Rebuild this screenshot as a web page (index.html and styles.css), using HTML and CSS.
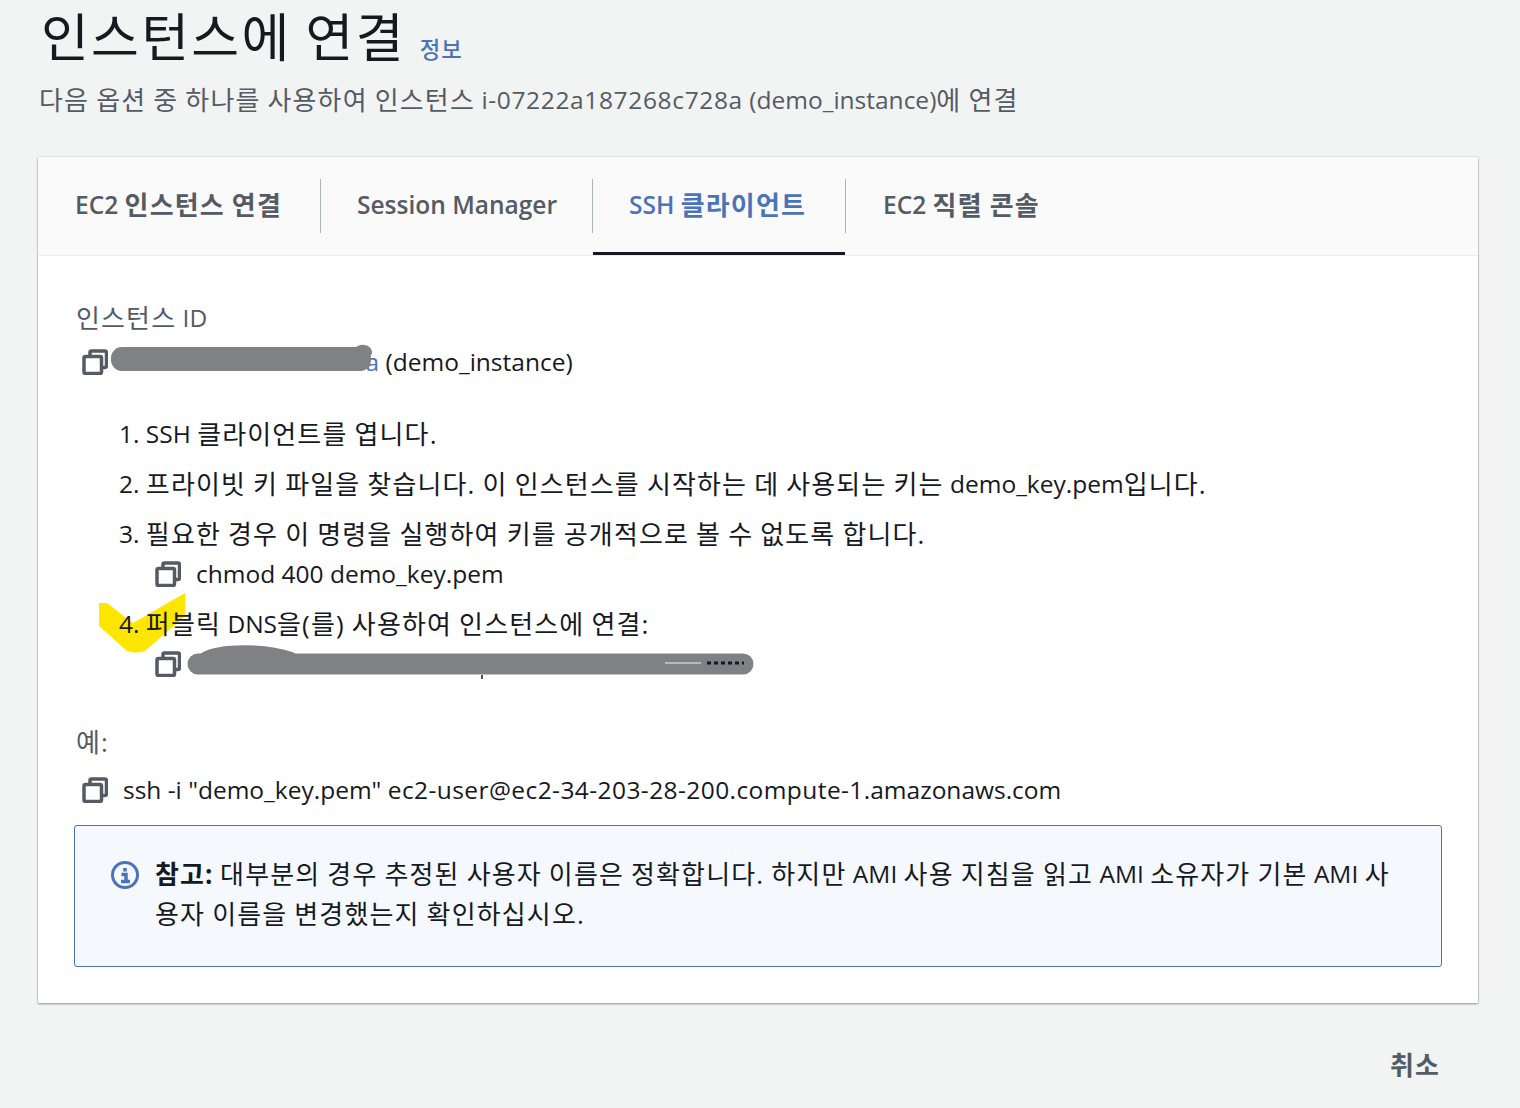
FILE: index.html
```html
<!DOCTYPE html>
<html lang="ko">
<head>
<meta charset="utf-8">
<title>인스턴스에 연결</title>
<link rel="stylesheet" href="styles.css">
</head>
<body>
<header class="page-head">
  <div class="title-row"><h1 class="title"><span class="ko">인스턴스에 연결</span></h1><a class="info-link"><span class="ko">정보</span></a></div>
  <p class="subtitle"><span class="ko">다음 옵션 중 하나를 사용하여 인스턴스</span> <span class="wide-id">i-07222a187268c728a</span> (demo_instance)<span class="ko">에 연결</span></p>
</header>
<main class="card">
  <nav class="tabs">
    <div class="tab tab-first">EC2 <span class="ko">인스턴스 연결</span></div>
    <div class="tab tab-session">Session Manager</div>
    <div class="tab tab-ssh tab-active">SSH <span class="ko">클라이언트</span></div>
    <div class="tab tab-last">EC2 <span class="ko">직렬 콘솔</span></div>
  </nav>
  <section class="content">
    <div class="field-label"><span class="ko">인스턴스</span> ID</div>
    <div class="copy-row instance-row">
      <svg class="copy-icon" viewBox="0 0 26 26"><path d="M8 7V3.500a1.500 1.500 0 0 1 1.500-1.500H23a1.500 1.500 0 0 1 1.500 1.500V17a1.500 1.500 0 0 1-1.500 1.500H19.500"/><rect x="2" y="7.500" width="17.500" height="17" rx="1.500"/></svg>
      <span class="instance-id"><a class="instance-link">i-07222a187268c728a</a> (demo_instance)</span>
      <svg class="scribble scribble-id" viewBox="0 0 266 30"><path d="M12 15H250M12 17H250"/><path class="scrib-thin" d="M248 8c3-3 9-3 10 1"/></svg>
    </div>
    <ol class="steps">
      <li class="step">SSH <span class="ko">클라이언트를 엽니다.</span></li>
      <li class="step"><span class="ko">프라이빗 키 파일을 찾습니다. 이 인스턴스를 시작하는 데 사용되는 키는</span> demo_key.pem<span class="ko">입니다.</span></li>
      <li class="step"><span class="ko">필요한 경우 이 명령을 실행하여 키를 공개적으로 볼 수 없도록 합니다.</span>
        <div class="copy-row cmd-row">
          <svg class="copy-icon" viewBox="0 0 26 26"><path d="M8 7V3.500a1.500 1.500 0 0 1 1.500-1.500H23a1.500 1.500 0 0 1 1.500 1.500V17a1.500 1.500 0 0 1-1.500 1.500H19.500"/><rect x="2" y="7.500" width="17.500" height="17" rx="1.500"/></svg>
          <span>chmod 400 demo_key.pem</span>
        </div>
      </li>
      <li class="step step-dns">
        <svg class="marker" viewBox="0 0 86 60"><path d="M0 10h8l26 20L86 0v23L46 58q-8 3-18 0L0 33z"/></svg>
        <span class="step-text"><span class="ko">퍼블릭</span> DNS<span class="ko">을(를) 사용하여 인스턴스에 연결:</span></span>
        <div class="copy-row cmd-row">
          <svg class="copy-icon" viewBox="0 0 26 26"><path d="M8 7V3.500a1.500 1.500 0 0 1 1.500-1.500H23a1.500 1.500 0 0 1 1.500 1.500V17a1.500 1.500 0 0 1-1.500 1.500H19.500"/><rect x="2" y="7.500" width="17.500" height="17" rx="1.500"/></svg>
          <svg class="scribble scribble-dns" viewBox="0 0 575 40"><path d="M13 21H558"/><path class="scrib-bump" d="M20 15C35 6 80 6 106 15"/><path class="scrib-tick" d="M297 32v4"/><path class="scrib-tail" d="M480 20h36"/><path class="scrib-text" d="M522 20h37"/></svg>
        </div>
      </li>
    </ol>
    <div class="example-label"><span class="ko">예:</span></div>
    <div class="copy-row example-row">
      <svg class="copy-icon" viewBox="0 0 26 26"><path d="M8 7V3.500a1.500 1.500 0 0 1 1.500-1.500H23a1.500 1.500 0 0 1 1.500 1.500V17a1.500 1.500 0 0 1-1.500 1.500H19.500"/><rect x="2" y="7.500" width="17.500" height="17" rx="1.500"/></svg>
      <span>ssh -i "demo_key.pem" <span class="wide-host">ec2-user@ec2-34-203-28-200.compute-1</span>.amazonaws.com</span>
    </div>
    <div class="notice">
      <svg class="notice-icon" viewBox="0 0 30 30"><circle cx="15" cy="15" r="12.500"/><path class="i-mark" d="M15 8v3.500M11.500 14.500h4.500v6M11 21.500h9"/></svg>
      <p class="notice-text"><strong class="notice-strong"><span class="ko">참고:</span></strong> <span class="ko">대부분의 경우 추정된 사용자 이름은 정확합니다. 하지만</span> AMI <span class="ko">사용 지침을 읽고</span> AMI <span class="ko">소유자가 기본</span> AMI <span class="ko">사용자 이름을 변경했는지 확인하십시오.</span></p>
    </div>
  </section>
</main>
<footer class="actions"><span class="cancel"><span class="ko">취소</span></span></footer>
</body>
</html>
```

FILE: styles.css
```css
* { box-sizing: border-box; }
html, body { margin: 0; height: 1108px; overflow: hidden; }
body {
  background: #f2f3f3;
  font-family: "Open Sans", "Noto Sans CJK KR", sans-serif;
  font-size: 24.5px;
  line-height: 40px;
  color: #16191f;
}
.ko { font-size: 1.06em; letter-spacing: .045em; word-spacing: -.035em; line-height: 1; vertical-align: -1px; }
.wide-id { letter-spacing: .65px; }
.wide-host { letter-spacing: .42px; }
.page-head { padding: 0 42px 0 40px; height: 157px; }
.title-row { display: flex; align-items: baseline; gap: 14px; height: 74px; }
.title { margin: 0; font-size: 49px; font-weight: 400; line-height: 74px; padding-left: 1px; }
.info-link { font-size: 21px; color: #4a73b8; font-weight: 500; }
.info-link .ko { vertical-align: -2px; }
.subtitle { margin: 6px 0 0 -1px; color: #545b64; line-height: 40px; }
.card {
  margin: 0 42px 0 38px;
  height: 846px;
  background: #fff;
  box-shadow: 0 1px 2px rgba(0, 28, 36, .4), 0 0 1px rgba(0, 28, 36, .3);
}
.tabs { display: flex; height: 99px; background: #fafafa; border-bottom: 1px solid #eaeded; padding-top: 22px; align-items: flex-start; }
.tab { height: 54px; padding: 0 36px; border-right: 1px solid #aab7b8; line-height: 52px; font-weight: 600; color: #545b64; white-space: nowrap; }
.tab-first { width: 283px; padding-left: 37px; }
.tab-session { width: 272px; }
.tab-ssh { width: 253px; position: relative; color: #4a73b8; padding-left: 36px; }
.tab-active::after { content: ""; position: absolute; left: 0; right: 0; top: 73px; height: 3px; background: #16191f; }
.tab-last { border-right: 0; padding-left: 37px; }
.content { padding: 42px 36px 0; }
.field-label { color: #545b64; height: 40px; padding-left: 2px; }
.copy-row { display: flex; align-items: center; position: relative; }
.copy-icon { width: 26px; height: 26px; flex: none; fill: none; stroke: #545b64; stroke-width: 3.500; stroke-linejoin: round; }
.instance-row { height: 48px; padding-left: 8px; gap: 22px; }
.instance-link { color: #4a73b8; }
.scribble { position: absolute; fill: none; stroke: #808184; stroke-linecap: round; stroke-linejoin: round; }
.scribble-id { left: 36px; top: 5px; width: 266px; height: 30px; stroke-width: 22; }
.scribble-id .scrib-thin { stroke-width: 8; }
.steps { margin: 28px 0 0; padding: 0 0 0 45px; list-style: none; counter-reset: step; }
.step { counter-increment: step; position: relative; margin-bottom: 10px; }
.step::before { content: counter(step) ". "; position: relative; z-index: 1; }
.step-dns { margin-bottom: 0; }
.step-text { position: relative; z-index: 1; }
.marker { position: absolute; left: -20px; top: -11px; width: 86px; height: 60px; fill: #ffe600; }
.cmd-row { height: 40px; margin-left: 36px; gap: 15px; }
.scribble-dns { left: 30px; top: -1px; width: 575px; height: 40px; stroke-width: 21; }
.scribble-dns .scrib-bump { stroke-width: 12; }
.scribble-dns .scrib-tick { stroke: #16191f; stroke-width: 1.500; stroke-linecap: butt; }
.scribble-dns .scrib-tail { stroke: #f2f2f2; stroke-width: 1; stroke-linecap: butt; }
.scribble-dns .scrib-text { stroke: #16191f; stroke-width: 3; stroke-linecap: butt; stroke-dasharray: 4 3; }
.example-label { color: #545b64; margin-top: 38px; height: 40px; padding-left: 2px; }
.example-row { height: 56px; padding-left: 8px; gap: 15px; }
.notice { display: flex; gap: 14px; margin-top: 7px; height: 142px; padding: 28px 48px 28px 35px; background: #f5f9fe; border: 1px solid #4a73b8; border-radius: 3px; }
.notice-icon { width: 30px; height: 30px; flex: none; margin-top: 6px; margin-right: 1px; fill: none; stroke: #4a73b8; stroke-width: 3; }
.i-mark { stroke-width: 3.500; }
.notice-text { margin: 0; }
.notice-strong { font-weight: 700; }
.actions { display: flex; justify-content: flex-end; padding: 42px 80px 0 0; }
.cancel { font-weight: 700; color: #545b64; }
```
